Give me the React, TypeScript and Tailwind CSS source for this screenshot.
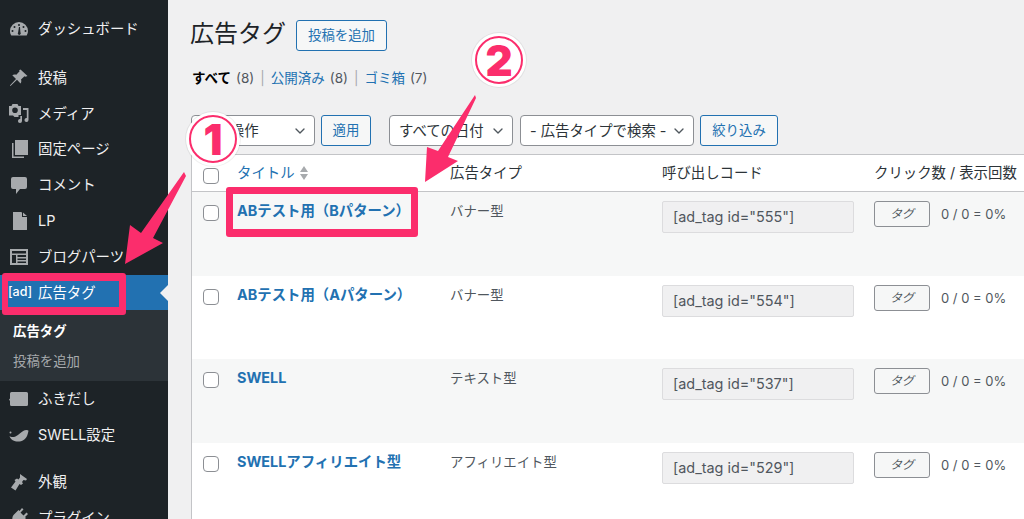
import React from 'react'
import { ChevronDown } from 'lucide-react'

const font = "font-['Inter','Noto_Sans_CJK_JP',sans-serif]"

const Gauge = () => (
  <svg width="20" height="20" viewBox="0 0 20 20" fill="#a7aaad">
    <path fillRule="evenodd" d="M10 3a9 9 0 0 0-9 9c0 1.800.5 3.300 1.300 4.600h15.400A8.800 8.800 0 0 0 19 12a9 9 0 0 0-9-9zM10 5a1 1 0 1 1 0 2 1 1 0 0 1 0-2zM5.500 7a1 1 0 1 1 0 2 1 1 0 0 1 0-2zM14.500 7a1 1 0 1 1 0 2 1 1 0 0 1 0-2zM3.500 11a1 1 0 1 1 0 2 1 1 0 0 1 0-2zM16.500 11a1 1 0 1 1 0 2 1 1 0 0 1 0-2zM11 8l.4 5.300a1.500 1.500 0 1 1-2.300.1L10 8z" />
  </svg>
)
const Pin = () => (
  <svg width="20" height="20" viewBox="0 0 20 20" fill="#a7aaad">
    <path d="M11.500 1.500l7 6.500-2 .8-1-.6-3.500 3.300c.6 1.500.3 3-.5 4L8 11.800 1.500 18l-.6-.6L7 11 3.300 7.300c1-.9 2.600-1.200 4-.5l3.300-3.500-.5-1z" />
  </svg>
)
const Media = () => (
  <svg width="20" height="20" viewBox="0 0 20 20" fill="#a7aaad">
    <path fillRule="evenodd" d="M0 3h2.500l1-2h5l1 2H12v9H9.500v2H5.500L4 12.500H0zM6 4.500a2.800 2.800 0 1 0 0 5.600 2.800 2.800 0 0 0 0-5.600z" />
    <path d="M14 5h5.500v12a2 2 0 1 1-1.700-2V7H14zM13 13v5a2 2 0 1 1-1.700-2v-3z" />
  </svg>
)
const Pages = () => (
  <svg width="20" height="20" viewBox="0 0 20 20" fill="#a7aaad">
    <path d="M6 1h13v15H6z" />
    <path d="M3 4h1.500v13.500H15V19H3z" />
  </svg>
)
const Comment = () => (
  <svg width="20" height="20" viewBox="0 0 20 20" fill="#a7aaad">
    <path d="M4 2h12a2 2 0 0 1 2 2v8a2 2 0 0 1-2 2h-5l-4 5v-5H4a2 2 0 0 1-2-2V4a2 2 0 0 1 2-2z" />
  </svg>
)
const Doc = () => (
  <svg width="20" height="20" viewBox="0 0 20 20" fill="#a7aaad">
    <path d="M4 1h8l1 .4v4.600h5v12.500a.5.5 0 0 1-.5.5h-13a.5.5 0 0 1-.5-.5zM14 1.500L18 5h-4z" />
  </svg>
)
const Parts = () => (
  <svg width="20" height="20" viewBox="0 0 20 20" fill="#a7aaad">
    <path fillRule="evenodd" d="M1 2h18v16H1zM3 4v2.500h14V4zM3 8v8h4V8zM8.500 8v2h8.500V8zM8.500 11.500v1.500h8.500v-1.500zM8.500 14.500V16h8.500v-1.500z" />
  </svg>
)
const Bubble = () => (
  <svg width="20" height="20" viewBox="0 0 20 20" fill="#a7aaad">
    <path d="M2.500 3h15A1.500 1.500 0 0 1 19 4.500v11a1.500 1.500 0 0 1-1.500 1.500h-15A1.500 1.500 0 0 1 1 15.500V12L0 10.500 1 9.500v-5A1.500 1.500 0 0 1 2.500 3z" />
  </svg>
)
const Swell = () => (
  <svg width="20" height="20" viewBox="0 0 20 20" fill="#a7aaad">
    <path d="M.5 11c1.500 1.500 4 1.200 6 .5 3.500-1.300 6-6 11-6.500 1 0 1.700.3 2 .7-.7 4-2 9-7.500 10.500C7 17 2 16 .5 11zM1.500 6.500a1 1 0 1 1 0 2 1 1 0 0 1 0-2z" />
  </svg>
)
const Brush = () => (
  <svg width="20" height="20" viewBox="0 0 20 20" fill="#a7aaad">
    <path d="M11 2l7 5-1 1.500-2.500-.5L13 10l1 1.500-2 1.500-1.500-1-4 6.500-4.500-3 4.500-6-1-1.500L8 6.500 9.500 7.500 11 5.500z" />
  </svg>
)
const Plug = () => (
  <svg width="20" height="20" viewBox="0 0 20 20" fill="#a7aaad">
    <path d="M13 1l1.500 1.500L11.500 5.500l3 3 3-3L19 7l-3 3 1 1-5 5c-2 1.500-4.500 1-5.500 0L3 19l-2-2 3-3.500C3 12.500 3 10 4.500 8l5-5 1 1z" />
  </svg>
)

type MenuItem = { label: string; icon: React.ReactNode; mt?: string }

const topItems: MenuItem[] = [
  { label: 'ダッシュボード', icon: <Gauge /> },
  { label: '投稿', icon: <Pin />, mt: 'mt-[13px]' },
  { label: 'メディア', icon: <Media /> },
  { label: '固定ページ', icon: <Pages /> },
  { label: 'コメント', icon: <Comment /> },
  { label: 'LP', icon: <Doc /> },
  { label: 'ブログパーツ', icon: <Parts /> },
]

const bottomItems: MenuItem[] = [
  { label: 'ふきだし', icon: <Bubble /> },
  { label: 'SWELL設定', icon: <Swell /> },
  { label: '外観', icon: <Brush />, mt: 'mt-[11px]' },
  { label: 'プラグイン', icon: <Plug /> },
]

const SideRow = ({ item }: { item: MenuItem }) => (
  <div className={`flex items-center h-[35.8px] pl-[9px] text-[14.4px] text-[#f0f0f1] ${item.mt ?? ''}`}>
    <span className="w-[29px] shrink-0 flex">{item.icon}</span>
    <span className="whitespace-nowrap">{item.label}</span>
  </div>
)

const Sidebar = () => (
  <aside className="w-[168px] h-[519px] shrink-0 bg-[#1d2327] overflow-hidden pt-[11px]">
    {topItems.map((item) => <SideRow key={item.label} item={item} />)}
    <div className="flex items-center h-[35.5px] pl-[8px] bg-[#2271b1] text-[14.4px] text-white relative">
      <span className="w-[30px] text-[12.5px] leading-none font-medium whitespace-nowrap">[ad]</span>
      <span>広告タグ</span>
      <span className="absolute right-0 top-[10px] w-0 h-0 border-y-[8px] border-y-transparent border-r-[8px] border-r-[#f0f0f1]" />
    </div>
    <div className="bg-[#2c3338] h-[71px] pt-[6px] pl-[13px] text-[13.4px]">
      <div className="h-[30px] flex items-center font-bold text-white">広告タグ</div>
      <div className="h-[30px] flex items-center text-[#a7aaad]">投稿を追加</div>
    </div>
    <div>
      {bottomItems.map((item) => <SideRow key={item.label} item={item} />)}
    </div>
  </aside>
)

const Select = ({ label, className }: { label: string; className: string }) => (
  <div className={`h-[31px] bg-white border border-[#8c8f94] rounded-[4px] flex items-center justify-between pl-[9px] pr-[6px] text-[14.4px] text-[#2c3338] whitespace-nowrap ${className}`}>
    <span>{label}</span>
    <ChevronDown size={16} strokeWidth={2} className="text-[#50575e] shrink-0" />
  </div>
)

const OutlineButton = ({ label, className }: { label: string; className: string }) => (
  <div className={`h-[31px] bg-[#f6f7f7] border border-[#2271b1] rounded-[3px] flex items-center justify-center text-[13.4px] text-[#2271b1] whitespace-nowrap ${className}`}>
    {label}
  </div>
)

const Checkbox = ({ className = '' }: { className?: string }) => (
  <div className={`w-[16px] h-[16px] bg-white border border-[#8c8f94] rounded-[4px] ${className}`} />
)

type Row = { title: string; type: string; code: string; bg: string }

const rows: Row[] = [
  { title: 'ABテスト用（Bパターン）', type: 'バナー型', code: '[ad_tag id="555"]', bg: 'bg-[#f6f7f7]' },
  { title: 'ABテスト用（Aパターン）', type: 'バナー型', code: '[ad_tag id="554"]', bg: 'bg-white' },
  { title: 'SWELL', type: 'テキスト型', code: '[ad_tag id="537"]', bg: 'bg-[#f6f7f7]' },
  { title: 'SWELLアフィリエイト型', type: 'アフィリエイト型', code: '[ad_tag id="529"]', bg: 'bg-white' },
]

const TableRow = ({ row }: { row: Row }) => (
  <div className={`grid grid-cols-[45px_213px_212px_212px_1fr] h-[83.5px] ${row.bg}`}>
    <div className="pl-[11px] pt-[13px]"><Checkbox /></div>
    <div className="pt-[9px] text-[14.4px] font-bold text-[#2271b1] whitespace-nowrap leading-[20px]">{row.title}</div>
    <div className="pt-[9px] text-[13.4px] text-[#50575e] leading-[20px]">{row.type}</div>
    <div className="pt-[9px]">
      <div className="w-[192px] h-[32px] bg-[#f0f0f1] border border-[#dcdcde] rounded-[2px] flex items-center pl-[10px] text-[14.4px] text-[#50575e] whitespace-nowrap">{row.code}</div>
    </div>
    <div className="pt-[9px] flex items-start whitespace-nowrap">
      <div className="w-[56px] h-[26px] bg-[#f6f7f7] border border-[#8c8f94] rounded-[3px] flex items-center justify-center text-[12px] italic text-[#50575e]">タグ</div>
      <span className="ml-[11px] mt-[3px] text-[13px] text-[#50575e] leading-[20px]">0 / 0 = 0%</span>
    </div>
  </div>
)

const Annotations = () => (
  <>
    <svg className="absolute left-0 top-0 pointer-events-none" width="1024" height="519" viewBox="0 0 1024 519">
      <path fillRule="evenodd" fill="#fb2d6c" d="M5 273h118a3 3 0 0 1 3 3v36a3 3 0 0 1-3 3H5a3 3 0 0 1-3-3v-36a3 3 0 0 1 3-3zM8 281v26h111v-26z" />
      <path fillRule="evenodd" fill="#fb2d6c" d="M229 187h186a3 3 0 0 1 3 3v44a3 3 0 0 1-3 3H229a3 3 0 0 1-3-3v-44a3 3 0 0 1 3-3zM233 194v35h178v-35z" />
      <path d="M184 172 L186 176 L153 238 L163 243 L125 264 L130 225 L141 233 Z" fill="#fb2d6c" />
      <path d="M475 95 L476 98 L448 157 L458 161 L425 182 L427 147 L438 151 Z" fill="#fb2d6c" />
      <circle cx="213" cy="139" r="28" fill="#000" fillOpacity="0.06" />
      <circle cx="213" cy="139" r="27" fill="#fff" />
      <circle cx="213" cy="139" r="23" fill="none" stroke="#fb2d6c" strokeWidth="2" />
      <circle cx="499" cy="60" r="28" fill="#000" fillOpacity="0.06" />
      <circle cx="499" cy="60" r="27" fill="#fff" />
      <circle cx="499" cy="60" r="23" fill="none" stroke="#fb2d6c" strokeWidth="2" />
    </svg>
    <span className="absolute left-[198px] top-[116px] w-[30px] text-center text-[42px] leading-[48px] font-black text-[#fb2d6c] font-['Inter',sans-serif]">1</span>
    <span className="absolute left-[484px] top-[37px] w-[30px] text-center text-[42px] leading-[48px] font-black text-[#fb2d6c] font-['Inter',sans-serif]">2</span>
  </>
)

export default function App() {
  return (
    <div className={`relative flex w-[1024px] h-[519px] overflow-hidden bg-[#f0f0f1] ${font}`}>
      <Sidebar />
      <main className="flex-1 pl-[23px] min-w-0">
        <div className="flex items-start pt-[20px]">
          <h1 className="text-[24px] leading-[28px] text-[#1d2327] -ml-[1px]">広告タグ</h1>
          <div className="ml-[10px] w-[91px] h-[31px] bg-[#f6f7f7] border border-[#2271b1] rounded-[3px] flex items-center justify-center text-[13.4px] text-[#2271b1]">投稿を追加</div>
        </div>
        <div className="mt-[17px] h-[20px] pl-[1px] flex items-center text-[13.5px] text-[#50575e] whitespace-nowrap">
          <span className="font-bold text-black">すべて</span>
          <span className="ml-[5px]">(8)</span>
          <span className="mx-[6px] text-[#a7aaad]">|</span>
          <span className="text-[#2271b1]">公開済み</span>
          <span className="ml-[5px]">(8)</span>
          <span className="mx-[6px] text-[#a7aaad]">|</span>
          <span className="text-[#2271b1]">ゴミ箱</span>
          <span className="ml-[5px]">(7)</span>
        </div>
        <div className="mt-[27px] flex items-center">
          <Select label="一括操作" className="w-[124px]" />
          <OutlineButton label="適用" className="ml-[6px] w-[50px]" />
          <Select label="すべての日付" className="ml-[18px] w-[124px]" />
          <Select label="- 広告タイプで検索 -" className="ml-[7px] w-[174px]" />
          <OutlineButton label="絞り込み" className="ml-[6px] w-[78px]" />
        </div>
        <div className="mt-[8px] border-t border-l border-[#c3c4c7] bg-white">
          <div className="grid grid-cols-[45px_213px_212px_212px_1fr] h-[37px] items-center border-b border-[#c3c4c7] text-[14.4px] text-[#2c3338] whitespace-nowrap">
            <div className="pl-[11px]"><Checkbox className="mt-[5px]" /></div>
            <div className="flex items-center text-[#2271b1]">
              タイトル
              <svg className="ml-[4px]" width="10" height="16" viewBox="0 0 10 16" fill="#a7aaad">
                <path d="M5 1l4 6H1zM5 15L1 9h8z" />
              </svg>
            </div>
            <div>広告タイプ</div>
            <div>呼び出しコード</div>
            <div>クリック数 / 表示回数</div>
          </div>
          {rows.map((row) => <TableRow key={row.code} row={row} />)}
        </div>
      </main>
      <Annotations />
    </div>
  )
}
